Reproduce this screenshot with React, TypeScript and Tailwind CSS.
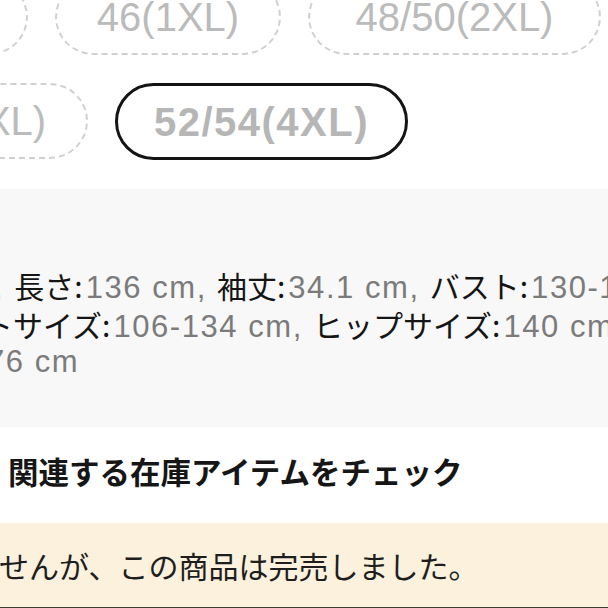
import React from "react";

function Pill({ label, w, selected }: { label: string; w: string; selected?: boolean }) {
  return (
    <div
      className={
        selected
          ? `flex shrink-0 items-center justify-center h-[77px] rounded-full border-[3px] border-solid border-[#141414] text-[40px] font-bold tracking-[1.5px] text-[#b6b6b6] ${w}`
          : `flex shrink-0 items-center justify-center h-[76px] rounded-full border-2 border-dashed border-[#d0d0d0] text-[40px] text-[#bbbbbb] ${w}`
      }
    >
      {label}
    </div>
  );
}

const L = "font-['Noto_Sans_CJK_JP',sans-serif] text-[30px] text-[#151515]";
const V = "font-['Liberation_Sans','Noto_Sans_CJK_JP',sans-serif] text-[31px] tracking-[0.05em] text-[#7b7b7b]";
const VM = `${V} ml-[3px]`;

export default function App() {
  return (
    <div className="w-[608px] h-[608px] overflow-hidden bg-white font-['Liberation_Sans','Noto_Sans_CJK_JP',sans-serif]">
      {/* size pills */}
      <div className="pb-[29px] whitespace-nowrap">
        <div className="flex gap-[27px] mt-[-21px] ml-[-172px]">
          <Pill label="44(XL)" w="w-[200px]" />
          <Pill label="46(1XL)" w="w-[226px]" />
          <Pill label="48/50(2XL)" w="w-[293px]" />
        </div>
        <div className="flex gap-[27px] mt-[28px] ml-[-138px]">
          <Pill label="50(3XL)" w="w-[226px]" />
          <Pill label="52/54(4XL)" w="w-[293px]" selected />
        </div>
      </div>

      {/* measurements */}
      <div className="h-[238px] bg-[#f8f8f8] pt-[77px] leading-[38.5px] whitespace-nowrap overflow-hidden">
        <div className="h-[38.5px] ml-[-6px]">
          <span className={V}>, </span>
          <span className={L}>長さ:</span>
          <span className={VM}>136 cm, </span>
          <span className={L}>袖丈:</span>
          <span className={VM}>34.1 cm, </span>
          <span className={L}>バスト:</span>
          <span className={VM}>130-134 cm,</span>
        </div>
        <div className="h-[38.5px] ml-[-17px]">
          <span className={L}>トサイズ:</span>
          <span className={VM}>106-134 cm, </span>
          <span className={L}>ヒップサイズ:</span>
          <span className={VM}>140 cm,</span>
        </div>
        <div className="h-[38.5px] ml-[-13px]">
          <span className={V}>76 cm</span>
        </div>
      </div>

      {/* heading */}
      <div className="h-[96px] flex items-center pl-[8px] pb-[6px] text-[30.5px] font-bold text-[#161616] font-['Noto_Sans_CJK_JP',sans-serif] whitespace-nowrap">
        関連する在庫アイテムをチェック
      </div>

      {/* sold out banner */}
      <div className="h-[86px] bg-[#fbf1dc] border-b-2 border-[#3c3933] flex items-center pt-[1px] overflow-hidden whitespace-nowrap">
        <div className="ml-[-180px] text-[30px] text-[#1e1e1e] font-['Noto_Sans_CJK_JP',sans-serif]">
          申し訳ありませんが、この商品は完売しました。
        </div>
      </div>
    </div>
  );
}
